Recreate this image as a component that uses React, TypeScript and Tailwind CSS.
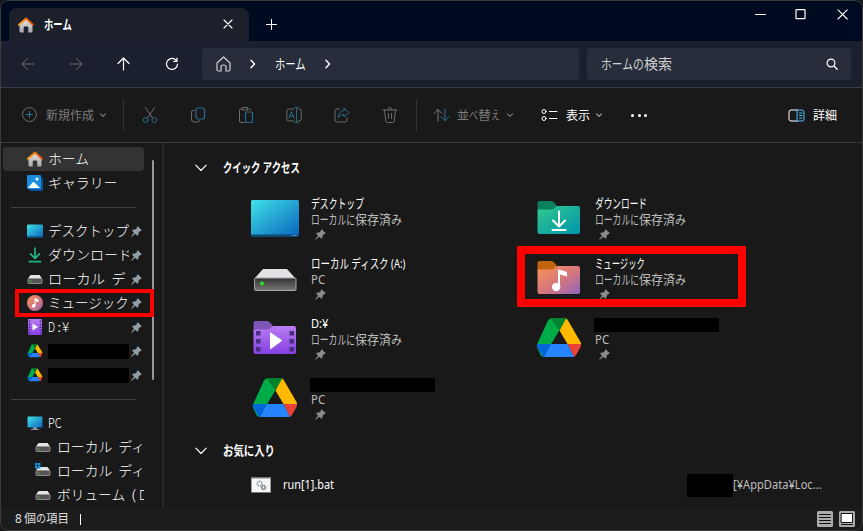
import React, { useLayoutEffect, useRef, useState } from "react";

type Kids = { children: React.ReactNode };

/* Condenses a label to the width of its box, as the narrow UI kana do. */
function Fit({ className = "", children }: Kids & { className?: string }) {
  const box = useRef<HTMLSpanElement>(null);
  const ink = useRef<HTMLSpanElement>(null);
  const [k, setK] = useState(1);
  useLayoutEffect(() => {
    if (box.current && ink.current) setK(box.current.clientWidth / ink.current.offsetWidth);
  }, []);
  return (
    <span ref={box} className={"block shrink-0 whitespace-nowrap " + className}>
      <span ref={ink} className="inline-block origin-left whitespace-pre" style={{ transform: `scaleX(${k})` }}>
        {children}
      </span>
    </span>
  );
}

function Ic({ w = 18, h = 18, className = "", children }: Kids & { w?: number; h?: number; className?: string }) {
  return (
    <svg width={w} height={h} viewBox={`0 0 ${w} ${h}`} fill="none" stroke="currentColor" strokeLinecap="round" strokeLinejoin="round" className={"block shrink-0 " + className}>
      {children}
    </svg>
  );
}

const blue = "#2a6a8b";

const Chevron = ({ className = "" }: { className?: string }) => (
  <Ic w={8} h={8} className={className}><path d="M1.500 2.800 4 5.300 6.500 2.800" strokeWidth="1.100" /></Ic>
);
const Crumb = ({ className = "" }: { className?: string }) => (
  <Ic w={8} h={10} className={className}><path d="M2 1.200 5.500 5 2 8.800" strokeWidth="1.400" /></Ic>
);

function Pin({ className = "" }: { className?: string }) {
  return (
    <svg width="11" height="11" viewBox="0 0 11 11" className={"block shrink-0 " + className} fill="currentColor">
      <path d="M6.6.2 10.8 4.2 9.9 4.9 9.1 5 7.5 6.9 7.3 9.1 6.4 9.8 4.2 7.8.7 10.8.2 10.3 3 6.7 1.1 4.6 1.8 3.8 4.1 3.6 6 1.9 5.9 1Z" />
    </svg>
  );
}

function House() {
  return (
    <svg width="16" height="16" viewBox="0 0 16 16" className="block shrink-0">
      <defs>
        <linearGradient id="wall" x2="0" y2="1"><stop stopColor="#e8e8e8" /><stop offset="1" stopColor="#a6a6a6" /></linearGradient>
        <linearGradient id="roof" x2="1"><stop stopColor="#ffa21a" /><stop offset="1" stopColor="#e04e0c" /></linearGradient>
      </defs>
      <path d="M1.500 7 8 1.500 14.500 7V14.500q0 1-1 1H10.300V10.500Q10.300 9.500 9.300 9.500H6.700Q5.700 9.500 5.700 10.500V15.500H2.500q-1 0-1-1Z" fill="url(#wall)" />
      <path d="M1 7.800 8 1.500 15 7.800" fill="none" stroke="url(#roof)" strokeWidth="1.900" strokeLinecap="round" strokeLinejoin="round" />
    </svg>
  );
}

function Drive({ size = 16, className = "" }: { size?: number; className?: string }) {
  return (
    <svg width={size} height={size} viewBox="0 0 48 48" className={"block shrink-0 " + className}>
      <path d="M13 6.500Q14.500 4 17 4L24.500 16 8.500 43Q6.500 42.500 5.500 41L2 33.500Q1.500 32 2.200 30Z" fill="#00ac47" />
      <path d="M2 30H16L9.500 43Q7.500 42.500 6.800 41L2.500 33.500Q1.800 32 2 30Z" fill="#0066da" />
      <path d="M16.500 4H30Q31.500 4 32.300 5L24.500 16.500 16 5Z" fill="#00832d" />
      <path d="M31 4.800Q32 4.500 33 6.500L45.500 28Q46.300 29.500 46 30H32.500L24.500 16.500Z" fill="#ffba00" />
      <path d="M32.500 30H46Q46 32 45.300 33.500L41 41Q40 42.700 38.800 43Z" fill="#ea4335" />
      <path d="M16 30H32.500L39 43H9Z" fill="#2684fc" />
    </svg>
  );
}

function Disk({ win = false }: { win?: boolean }) {
  return (
    <svg width="16" height="16" viewBox="0 0 16 16" className="block shrink-0">
      <path d="M3.500 4H12.500L15 7.500H1Z" fill="#e5e5e8" />
      <rect x="1" y="7.500" width="14" height="5" rx=".6" fill="#555" stroke="#a0a0a0" strokeWidth=".8" />
      <circle cx="3.700" cy="10" r=".8" fill="#2bd13c" />
      {win && <path d="M0 0H2.500V2.500H0ZM3 0H5.500V2.500H3ZM0 3H2.500V5.500H0ZM3 3H5.500V5.500H3Z" fill="#1694e6" />}
    </svg>
  );
}

function DesktopMini() {
  return (
    <svg width="16" height="16" viewBox="0 0 16 16" className="block shrink-0">
      <rect y="1.500" width="16" height="13" rx="1" fill="url(#sky)" />
      <path d="M0 13.500H16" stroke="#0b5c93" />
    </svg>
  );
}

function Gradients() {
  return (
    <svg width="0" height="0" className="absolute">
      <defs>
        <linearGradient id="sky" x2="1" y2="1"><stop stopColor="#3fe3e8" /><stop offset="1" stopColor="#0a63bd" /></linearGradient>
        <linearGradient id="mint" x2="1" y2="1"><stop stopColor="#34c88c" /><stop offset="1" stopColor="#0095ad" /></linearGradient>
        <linearGradient id="peach" x2="1" y2="1"><stop stopColor="#fb9256" /><stop offset=".55" stopColor="#d4767f" /><stop offset="1" stopColor="#9064bc" /></linearGradient>
        <linearGradient id="violet" x2="0" y2="1"><stop stopColor="#ba7df2" /><stop offset="1" stopColor="#8440e4" /></linearGradient>
        <linearGradient id="metal" x2="0" y2="1"><stop stopColor="#333" /><stop offset="1" stopColor="#777" /></linearGradient>
      </defs>
    </svg>
  );
}

function Folder({ back, front, children }: Kids & { back: string; front: string }) {
  return (
    <svg width="48" height="48" viewBox="0 0 48 48" className="block shrink-0">
      <path d="M2.500 9Q2.500 7 4.500 7H16Q17.500 7 18.500 8L21.500 11V17H2.500Z" fill={back} />
      <path d="M2.500 16.500Q2.500 15.500 3.500 15.500H16Q18 15.500 19.500 14L21 12.500Q21.700 12 23 12H43Q45 12 45 14V38Q45 40 43 40H4.500Q2.500 40 2.500 38Z" fill={front} />
      {children}
    </svg>
  );
}

const DownloadFolder = () => (
  <Folder back="#0a805c" front="url(#mint)">
    <path d="M24 17.500V32M18 26.500 24 32.500 30 26.500M17.500 36H30.500" fill="none" stroke="#fff" strokeWidth="2" strokeLinecap="round" strokeLinejoin="round" />
  </Folder>
);
const MusicFolder = () => (
  <Folder back="#c0640e" front="url(#peach)">
    <path d="M24 16.500V33" stroke="#fff" strokeWidth="2" />
    <path d="M23 16Q23 15.300 24 15.500L32 18V22.500L25 20.500Z" fill="#fff" />
    <circle cx="21.200" cy="33" r="4.200" fill="#fff" />
  </Folder>
);
const VideoFolder = () => (
  <Folder back="#7d55b5" front="url(#violet)">
    <path d="M5 17H9.500V21.500H5ZM5 25H9.500V29.500H5ZM5 33H9.500V37.500H5ZM38.500 17H43V21.500H38.500ZM38.500 25H43V29.500H38.500ZM38.500 33H43V37.500H38.500Z" fill="#4a2e80" />
    <path d="M19 19Q19 18 20 18.700L30.700 26Q31.200 26.500 30.700 27L20 35Q19 35.500 19 34.500Z" fill="#fff" />
  </Folder>
);
const DesktopBig = () => (
  <svg width="48" height="48" viewBox="0 0 48 48" className="block shrink-0">
    <rect y="6" width="48" height="36.500" rx="1.500" fill="url(#sky)" />
    <path d="M0 40.500H48V41.500Q48 42.500 47 42.500H1Q0 42.500 0 41.500Z" fill="#0a4a77" />
    <path d="M41.500 41.500H43M44 41.500H45.500" stroke="#7dbce0" />
  </svg>
);
const DiskBig = () => (
  <svg width="48" height="48" viewBox="0 0 48 48" className="block shrink-0">
    <path d="M12 15H36L44.500 24.500H3.500Z" fill="#e2e2e6" />
    <rect x="3.500" y="24" width="41.500" height="12.500" rx="1" fill="url(#metal)" stroke="#a5a5a5" />
    <circle cx="11" cy="29.500" r="2" fill="#2be52b" />
  </svg>
);

function Item({ icon, title, sub = "PC" }: { icon: React.ReactNode; title: React.ReactNode; sub?: "PC" | "local" }) {
  return (
    <div className="flex h-[60px] w-[284px] items-start gap-3">
      <div className="pt-1.5">{icon}</div>
      <div className="pt-[7px]">
        <div className="flex h-4 items-center text-white">{title}</div>
        <div className="flex h-4 items-center text-[13px] leading-4 text-[#bdbdbd]">
          {sub === "PC" ? <Fit className="w-[14px]">PC</Fit> : (
            <>
              <Fit className="w-[44px]">ローカルに</Fit>
              <Fit className="w-[36px]">保存済</Fit>
              <Fit className="w-[11px]">み</Fit>
            </>
          )}
        </div>
        <Pin className="ml-1 mt-[2px] text-[#8b8b8b]" />
      </div>
    </div>
  );
}

const Redacted = () => <div className="-ml-px mt-1 h-[14px] w-[125px] bg-black" />;
const SideRedacted = () => <div className="mt-[2px] h-[15px] w-[82px] bg-black" />;

function SideRow({ icon, pin = false, children }: Kids & { icon: React.ReactNode; pin?: boolean }) {
  return (
    <div className="flex h-6 items-center pl-[27px] text-[13.500px] font-light leading-[22px] text-white">
      {icon}
      <div className="ml-[5px] w-[81px] overflow-hidden pb-[2px]">{children}</div>
      {pin && <Pin className="ml-[2px] text-[#939da5]" />}
    </div>
  );
}

function SubRow({ icon, children }: Kids & { icon: React.ReactNode }) {
  return (
    <div className="flex h-6 w-[144px] items-center overflow-hidden pl-[35px] text-[13.500px] font-light leading-[22px] text-white">
      {icon}
      <div className="ml-[6px] flex pb-[2px]">{children}</div>
    </div>
  );
}

const Tool = ({ children }: Kids) => <div className="flex w-12 justify-center text-[#6c6c6c]">{children}</div>;

export default function App() {
  return (
    <div className="h-[531px] w-[863px] overflow-hidden bg-[#191919] font-['Noto_Sans','Noto_Sans_CJK_JP',sans-serif]">
      <div className="relative flex h-full flex-col overflow-hidden rounded-lg bg-[#191919] text-white">
        <Gradients />

        {/* Title bar */}
        <header className="flex h-[41px] items-end bg-[#000a21]">
          <div className="ml-[9px] flex h-[33px] w-[240px] items-center rounded-t-lg bg-[#1b202b] pl-[9px]">
            <House />
            <Fit className="ml-[10px] w-[28px] text-[13px] font-bold">ホーム</Fit>
            <Ic w={10} h={10} className="mb-px ml-[151px]"><path d="M1 1 9 9M9 1 1 9" strokeWidth="1.100" /></Ic>
          </div>
          <Ic w={11} h={11} className="mb-[11px] ml-[17px]"><path d="M5.500.5V10.500M.5 5.500H10.500" /></Ic>
          <div className="mb-[21px] ml-auto flex items-center pr-[15px]">
            <Ic w={11} h={11} className="mr-[29px]"><path d="M.5 5.500H10.500" /></Ic>
            <Ic w={11} h={11} className="mr-[31px]"><rect x="1" y=".7" width="9" height="9" rx=".5" strokeWidth="1.200" /></Ic>
            <Ic w={11} h={11}><path d="M1 .8 10.200 10M10.200.8 1 10" strokeWidth="1.100" /></Ic>
          </div>
        </header>

        {/* Navigation */}
        <nav className="flex h-[47px] items-center border-b border-[#3b3d40] bg-[#1a202e] pl-1">
          <Tool><Ic w={14} h={14}><path d="M13 7H1M6.500 1.500 1 7 6.500 12.500" /></Ic></Tool>
          <Tool><Ic w={14} h={14}><path d="M1 7H13M7.500 1.500 13 7 7.500 12.500" /></Ic></Tool>
          <Tool><Ic w={14} h={14} className="text-white"><path d="M6.500 13V1.200M1 6.500 6.500 1 12 6.500" strokeWidth="1.200" /></Ic></Tool>
          <Tool><Ic w={14} h={14} className="text-white"><path d="M12.500 7A5.500 5.500 0 1 1 10.500 2.700L12 4.200M12 1V4.300H8.700" strokeWidth="1.200" /></Ic></Tool>
          <div className="ml-[6px] flex h-8 w-[377px] items-center rounded bg-[#272d3a] pl-[14px]">
            <Ic w={15} h={16} className="text-[#d4d4d4]"><path d="M1 7 7.500 1 14 7V13.500Q14 15 12.700 15H10V11Q10 9 7.500 9T5 11V15H2.300Q1 15 1 13.500Z" strokeWidth="1.200" /></Ic>
            <Crumb className="ml-[18px]" />
            <Fit className="ml-[18px] w-[31px] pb-[2px] text-[14px]">ホーム</Fit>
            <Crumb className="ml-[18px]" />
          </div>
          <div className="ml-2 flex h-8 w-[264px] items-center rounded bg-[#272d3a] pl-[14px] text-[14px] text-[#d0d0d0]">
            <Fit className="w-[43px] pb-[2px]">ホームの</Fit>
            <Fit className="w-[28px] pb-[2px]">検索</Fit>
            <Ic w={12} h={12} className="ml-auto mr-[13px] text-white"><circle cx="5" cy="5" r="3.900" strokeWidth="1.200" /><path d="M8 8 11.200 11.200" strokeWidth="1.300" /></Ic>
          </div>
        </nav>

        {/* Command bar */}
        <div className="flex h-[55px] items-center border-b border-[#3a3a3a] bg-[#191919] text-[12px] text-[#7c7c7c]">
          <Ic w={16} h={16} className="ml-[21px] text-[#6c6c6c]"><circle cx="8.500" cy="7.500" r="7" /><path d="M8.500 4.500V10.500M5.500 7.500H11.500" stroke="#31779b" /></Ic>
          <Fit className="ml-[9px] w-[48px] pt-px">新規作成</Fit>
          <Chevron className="ml-[5px]" />
          <div className="ml-[16px] h-8 w-px bg-[#333]" />
          <div className="ml-[2px] flex">
            <Tool><Ic w={16} h={18}><path d="M3.500 1.500 10.500 12M12.500 1.500 5.500 12" /><circle cx="3.700" cy="14" r="2.400" stroke={blue} /><circle cx="12.300" cy="14" r="2.400" stroke={blue} /></Ic></Tool>
            <Tool><Ic w={16} h={18}><path d="M4 4.500H3Q1.500 4.500 1.500 6V13.500Q1.500 16 4 16H8Q9.500 16 9.500 14.500" /><rect x="6" y="2" width="8.500" height="11" rx="2" stroke={blue} strokeWidth="1.200" /></Ic></Tool>
            <Tool><Ic w={16} h={18}><path d="M4 3H2.500Q1.500 3 1.500 4V15Q1.500 16.500 3 16.500H6M10.500 3H12Q12.500 3 12.500 4M5 1.500H9.500V4H5Z" /><rect x="7.500" y="6" width="7" height="10.500" rx="1" stroke={blue} strokeWidth="1.200" /></Ic></Tool>
            <Tool><Ic w={16} h={18}><path d="M8 3H2.800Q.8 3 .8 5V13Q.8 15 2.800 15H8M12.500 3H13.200Q15.200 3 15.200 5V13Q15.200 15 13.200 15H12.500" /><path d="M3 12 5.500 5.500 8 12M4 10H7M10.500 1.500V16.500M8.800 1.500H12.200M8.800 16.500H12.200" stroke={blue} /></Ic></Tool>
            <Tool><Ic w={16} h={18}><path d="M5.500 3H3Q1 3 1 5V14Q1 16 3 16H11Q13 16 13 14V12" /><path d="M10 2 15 6.500 10 11V8.500Q6.500 8.300 4 11.500 4.500 5 10 4.500Z" stroke={blue} /></Ic></Tool>
            <Tool><Ic w={16} h={18}><path d="M1 4H15M6 4Q6 1.500 8 1.500T10 4M2.500 4 3.800 15Q4 16.500 5.300 16.500H10.700Q12 16.500 12.200 15L13.500 4M6.500 7.500V12.500M9.500 7.500V12.500" /></Ic></Tool>
          </div>
          <div className="ml-[2px] h-8 w-px bg-[#333]" />
          <Ic w={17} h={14} className="ml-[16px]"><path d="M5 13V1.500M1 5.500 5 1.500 9 5.500" /><path d="M12 1V12.500M8 8.500 12 12.500 16 8.500" stroke="#31779b" /></Ic>
          <div className="ml-[7px] flex pt-px"><Fit className="w-[12px]">並</Fit><Fit className="w-[9px]">べ</Fit><Fit className="w-[13px]">替</Fit><Fit className="w-[9px]">え</Fit></div>
          <Chevron className="ml-[6px]" />
          <Ic w={17} h={14} className="ml-[27px] text-white"><circle cx="3" cy="3.500" r="2" /><circle cx="3" cy="10.500" r="2" /><path d="M8.500 3.500H16M8.500 10.500H16" /></Ic>
          <Fit className="ml-[8px] w-[24px] pt-px text-white">表示</Fit>
          <Chevron className="ml-[5px] text-[#aaa]" />
          <div className="ml-[28px] flex gap-[3.500px]">
            <i className="size-[3px] rounded-full bg-white" /><i className="size-[3px] rounded-full bg-white" /><i className="size-[3px] rounded-full bg-white" />
          </div>
          <Ic w={17} h={13} className="ml-auto text-white"><path d="M9.500 1H3Q1 1 1 3V10Q1 12 3 12H9.500" /><path d="M9.500 1H14Q16 1 16 3V10Q16 12 14 12H9.500ZM11.500 4H14M11.500 6.500H14M11.500 9H14" stroke="#4cc2ff" /></Ic>
          <Fit className="ml-[8px] mr-[26px] w-[24px] pt-px text-white">詳細</Fit>
        </div>

        <div className="flex h-[364px] overflow-hidden">
          {/* Navigation pane */}
          <aside className="relative w-[164px] border-r-2 border-[#282828] bg-[#191919] pt-1 font-['Noto_Sans_CJK_JP',sans-serif]">
            <div className="ml-[3px] w-[141px] rounded-sm bg-[#333] [&>div]:pl-[24px]">
              <SideRow icon={<House />}><Fit className="w-[41px]">ホーム</Fit></SideRow>
            </div>
            <SideRow icon={
              <svg width="16" height="16" viewBox="0 0 16 16" className="block shrink-0"><rect x="2.500" y="2.500" width="13.500" height="13.500" rx="1.500" fill="#0c559d" /><rect width="14" height="14" rx="1" fill="#188de0" /><path d="M1 13 5.500 7.500Q6.500 6.500 7.500 7.500L13 13Z" fill="#fff" /><circle cx="10" cy="4" r="1.500" fill="#fff" /></svg>
            }><Fit className="w-[70px]">ギャラリー</Fit></SideRow>
            <div className="mb-[11px] ml-[11px] mt-3 h-px w-[125px] bg-[#404040]" />
            <SideRow pin icon={<DesktopMini />}><Fit className="w-[81px]">デスクトップ</Fit></SideRow>
            <SideRow pin icon={<Ic w={16} h={16} className="text-[#22b584]"><path d="M8 1V11M3.500 6.800 8 11.300 12.500 6.800M2.500 14.700H13.500" strokeWidth="1.700" /></Ic>}><Fit className="w-[84px]">ダウンロード</Fit></SideRow>
            <SideRow pin icon={<Disk />}><Fit className="w-[77px]">{"ローカル  デ"}</Fit></SideRow>
            <SideRow pin icon={
              <svg width="16" height="16" viewBox="0 0 16 16" className="block shrink-0"><circle cx="8" cy="8" r="8" fill="url(#peach)" /><path d="M8 3.500V11M8 3.500 11 4.800V6.500L8 5.500" fill="#fff" stroke="#fff" /><circle cx="6.700" cy="10.800" r="1.900" fill="#fff" /></svg>
            }><Fit className="w-[81px]">ミュージック</Fit></SideRow>
            <SideRow pin icon={
              <svg width="16" height="16" viewBox="0 0 16 16" className="block shrink-0"><rect x="1" width="14" height="16" rx="1" fill="url(#violet)" /><path d="M2.500 1.500V15M13.500 1.500V15" stroke="#4a2e80" strokeWidth="1.500" strokeDasharray="1.500 1.500" /><path d="M5.500 4.500 11 8 5.500 11.500Z" fill="#fff" /></svg>
            }>
              <div className="flex"><Fit className="w-[7px]">D</Fit><Fit className="ml-[2px] w-[4px]">:</Fit><Fit className="ml-px w-[7px]">¥</Fit></div>
            </SideRow>
            <SideRow pin icon={<Drive />}><SideRedacted /></SideRow>
            <SideRow pin icon={<Drive />}><SideRedacted /></SideRow>
            <div className="mb-[11px] ml-[11px] mt-3 h-px w-[125px] bg-[#404040]" />
            <SideRow icon={
              <svg width="16" height="16" viewBox="0 0 16 16" className="block shrink-0"><path d="M6 12H10V14H12V15H4V14H6Z" fill="#8a9299" /><rect x=".5" y="1.500" width="15" height="11" rx="1" fill="url(#sky)" /></svg>
            }><Fit className="w-[14px]">PC</Fit></SideRow>
            <SubRow icon={<Disk />}><Fit className="w-[88px]">{"ローカル  ディ"}</Fit></SubRow>
            <SubRow icon={<Disk win />}><Fit className="w-[88px]">{"ローカル  ディ"}</Fit></SubRow>
            <SubRow icon={<Disk />}><Fit className="w-[68px]">ボリューム</Fit><Fit className="ml-[6px] w-[5px]">(</Fit><Fit className="ml-[3px] w-[8px]">D</Fit></SubRow>
            <div className="absolute left-[152px] top-[17px] h-[220px] w-[2px] rounded bg-[#989898]" />
            <div className="absolute left-[15px] top-[146px] h-[28px] w-[139px] border-4 border-[#fe0000]" />
          </aside>

          {/* Content */}
          <main className="relative flex-1 bg-[#191919] pt-1">
            <div className="flex h-[41px] items-center pl-[31px]">
              <Ic w={12} h={8}><path d="M.8 1.200 6 6.500 11.200 1.200" strokeWidth="1.100" /></Ic>
              <Fit className="ml-4 w-[77px] text-[13px] font-bold">クイック アクセス</Fit>
            </div>
            <div className="ml-[87px] grid w-[568px] grid-cols-2 text-[13px] leading-4">
              <Item icon={<DesktopBig />} sub="local" title={<Fit className="w-[53px]">デスクトップ</Fit>} />
              <Item icon={<DownloadFolder />} sub="local" title={<Fit className="w-[52px]">ダウンロード</Fit>} />
              <Item icon={<DiskBig />} title={<Fit className="w-[94px]">ローカル ディスク (A:)</Fit>} />
              <Item icon={<MusicFolder />} sub="local" title={<Fit className="w-[50px]">ミュージック</Fit>} />
              <Item icon={<VideoFolder />} sub="local" title={<Fit className="w-[17px]">D:¥</Fit>} />
              <Item icon={<Drive size={48} />} title={<Redacted />} />
              <Item icon={<Drive size={48} />} title={<Redacted />} />
            </div>
            <div className="flex h-[45px] items-center pl-[31px]">
              <Ic w={12} h={8}><path d="M.8 1.200 6 6.500 11.200 1.200" strokeWidth="1.100" /></Ic>
              <Fit className="ml-4 w-[52px] text-[13px] font-bold">お気に入り</Fit>
            </div>
            <div className="flex h-6 items-center pl-[87px] text-[13px]">
              <svg width="20" height="16" viewBox="0 0 20 16" className="block"><rect width="20" height="16" fill="#777" /><rect x=".7" y="1.500" width="18.600" height="13.500" fill="#f7f7f7" /><circle cx="8.500" cy="6.500" r="2.300" fill="none" stroke="#8ba0b3" strokeWidth="1.600" strokeDasharray="1.300 .5" /><circle cx="12.500" cy="10.500" r="1.900" fill="none" stroke="#4d5961" strokeWidth="1.500" strokeDasharray="1.200 .5" /></svg>
              <Fit className="ml-3 w-[51px]">run[1].bat</Fit>
              <div className="ml-[353px] h-[23px] w-[46px] bg-black" />
              <Fit className="w-[89px] text-[#bdbdbd]">[¥AppData¥Loc...</Fit>
            </div>
            <div className="absolute left-[353px] top-[103px] h-[61px] w-[229px] border-8 border-[#fe0000]" />
          </main>
        </div>

        {/* Status bar */}
        <footer className="flex h-6 items-center bg-[#1c1c1c] pl-[15px] text-[12px] text-[#dedede]">
          <Fit className="w-[7px]">8</Fit>
          <Fit className="ml-[2px] w-[12px]">個</Fit><Fit className="w-[10px]">の</Fit><Fit className="w-[23px]">項目</Fit>
          <div className="ml-[11px] h-[11px] w-px bg-white" />
          <Ic w={16} h={16} className="mb-px ml-auto"><rect width="16" height="16" rx="1.500" fill="#ababab" stroke="none" /><path d="M2.500 3.500H13.500M2.500 6.500H13.500M2.500 9.500H13.500M2.500 12.500H13.500" stroke="#111" /></Ic>
          <Ic w={16} h={16} className="mb-px ml-[6px] mr-[8px]"><rect width="16" height="16" rx="1.500" fill="#ababab" stroke="none" /><rect x="2.500" y="2.500" width="11" height="9" fill="#fff" stroke="#111" /><path d="M2.500 13.500H13.500" stroke="#111" /></Ic>
        </footer>
        <div className="pointer-events-none absolute inset-0 rounded-lg border border-[#3c3c3c]" />
      </div>
    </div>
  );
}
